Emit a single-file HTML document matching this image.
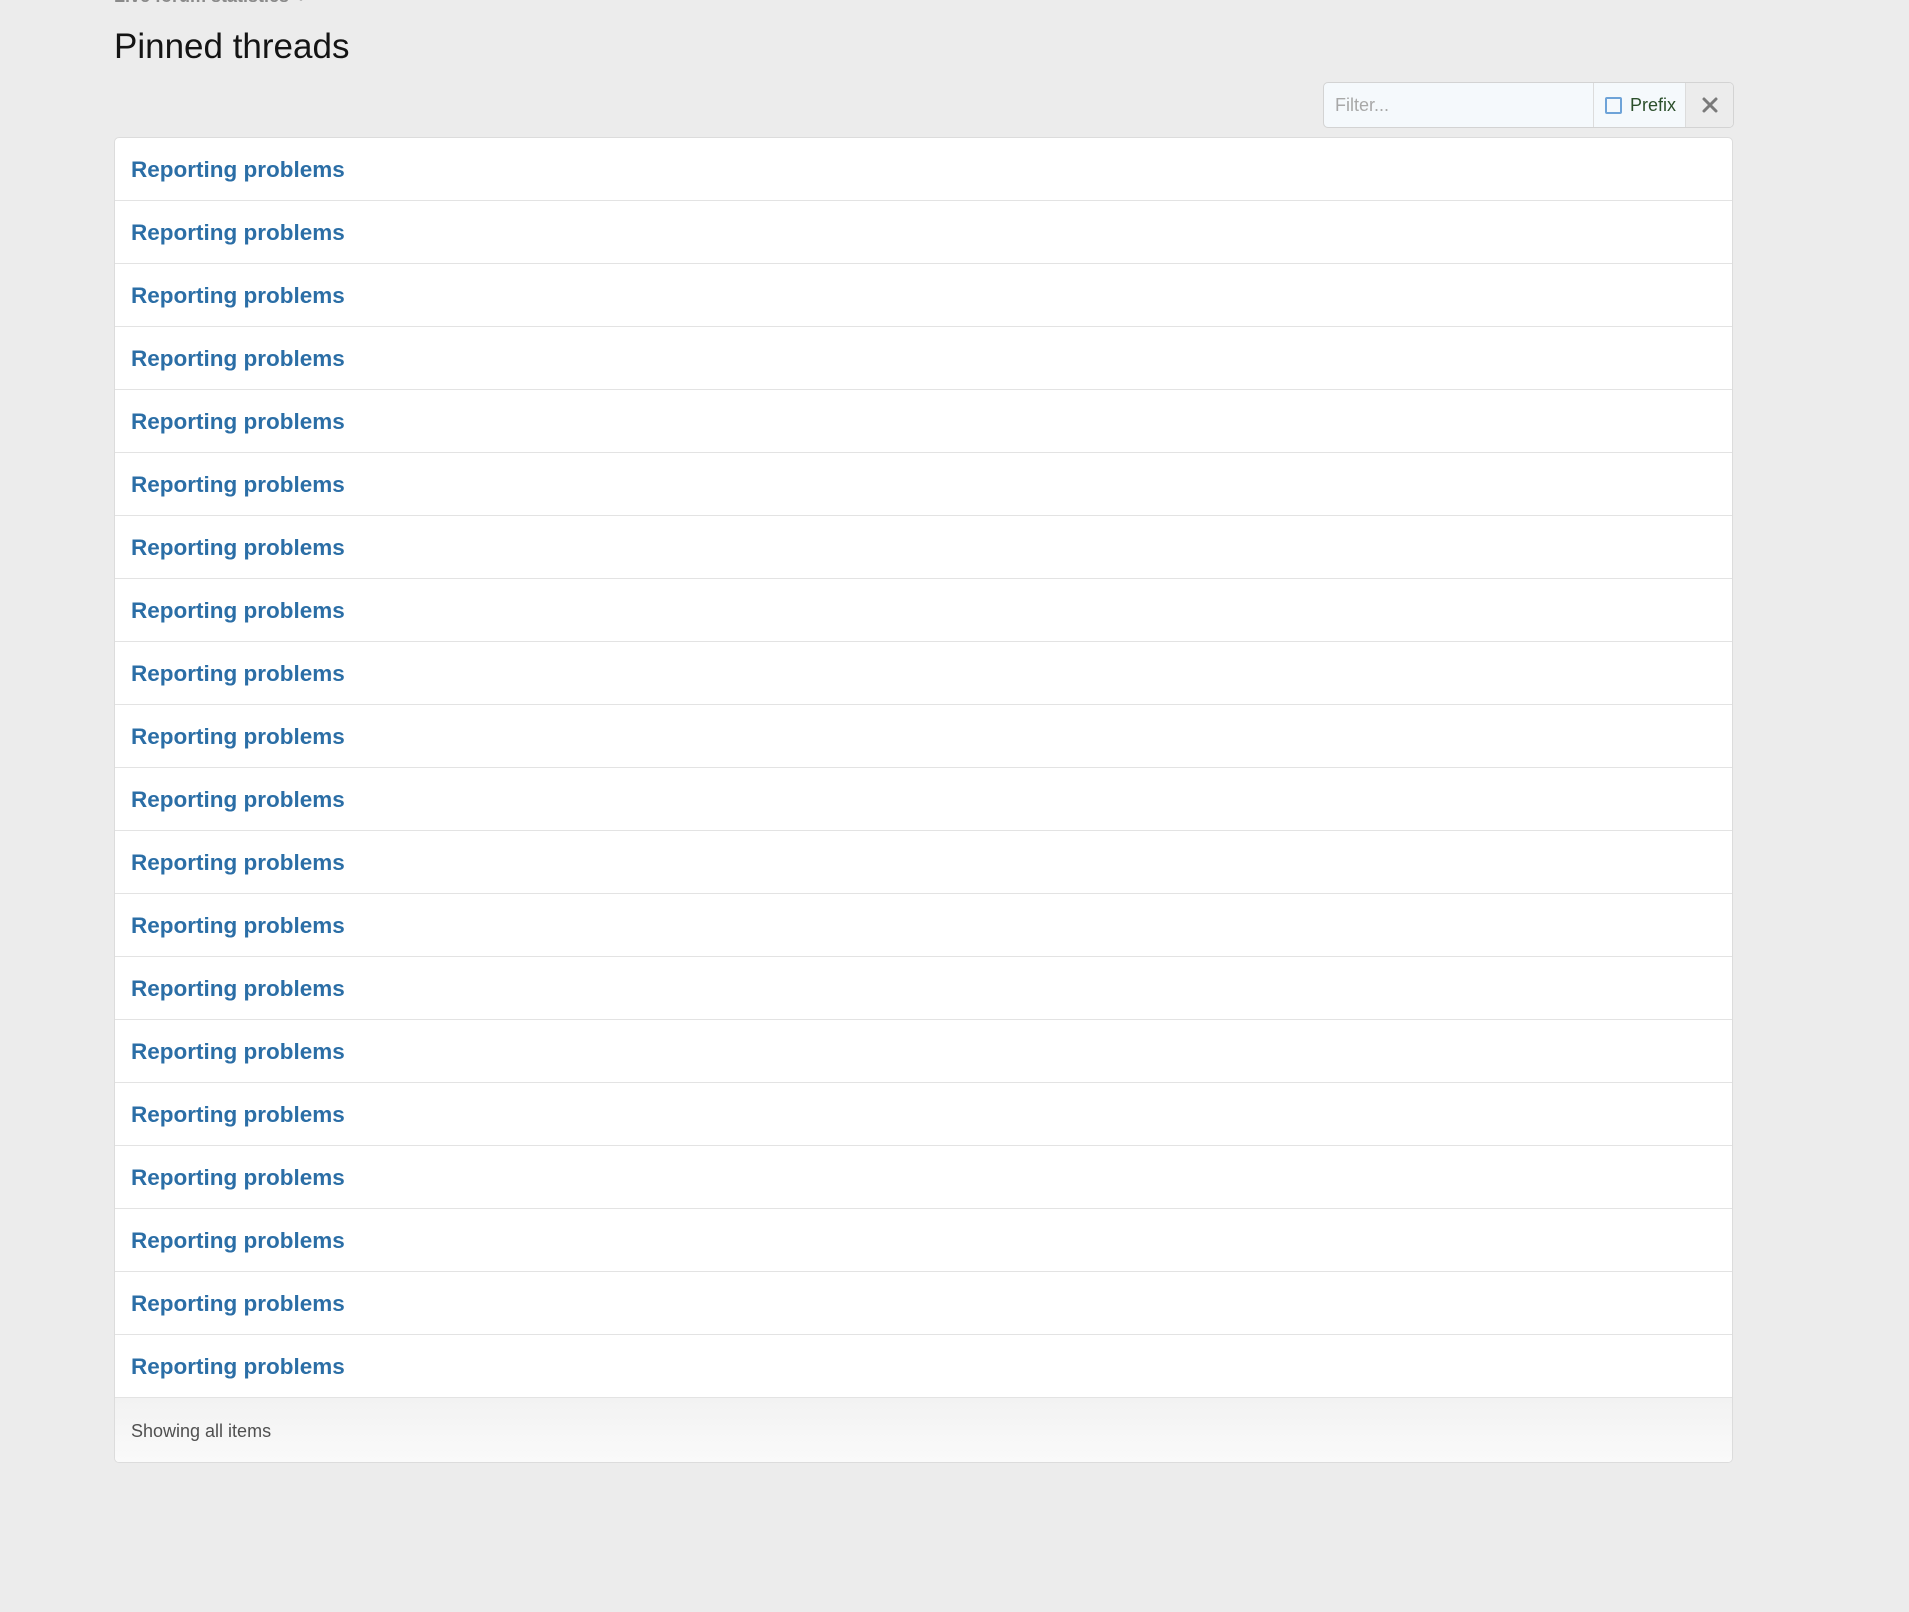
<!DOCTYPE html>
<html><head><meta charset="utf-8"><style>
html,body{margin:0;padding:0}
body{width:1909px;height:1612px;background:#ececec;position:relative;overflow:hidden;font-family:"Liberation Sans",sans-serif}
.bc{position:absolute;left:114px;top:-14px;font-size:18px;font-weight:bold;color:#8a8a8a}
h1{position:absolute;left:114px;top:23px;margin:0;font-weight:normal;font-size:35px;color:#141414;line-height:48px}
.filter{position:absolute;left:1323px;top:82px;width:409px;height:44px;border:1px solid #d3d3d3;border-radius:5px;background:#f5f9fc;overflow:hidden}
.filter .inp{position:absolute;left:11px;top:12px;font-size:18px;color:#a8a8a8}
.filter .pf{position:absolute;left:269px;top:0;width:91px;height:44px;border-left:1px solid #dcdcdc;}
.filter .cb{position:absolute;left:11px;top:14px;width:13px;height:13px;border:2px solid #6ea3d8;border-radius:2px}
.filter .pt{position:absolute;left:36px;top:12px;font-size:18px;color:#2b4f2b}
.filter .x{position:absolute;left:361px;top:0;width:48px;height:44px;border-left:1px solid #dcdcdc;background:#ececec;}
.box{position:absolute;left:114px;top:137px;width:1617px;height:1324px;border:1px solid #dcdcdc;border-radius:5px;background:#fff;overflow:hidden}
.row{height:62px;border-bottom:1px solid #e3e3e3;position:relative}
.row a{position:absolute;left:16px;top:19px;font-size:22.5px;font-weight:bold;color:#2b6ea6;text-decoration:none}
.foot{height:64px;background:linear-gradient(#f2f2f2,#fafafa);position:relative}
.foot span{position:absolute;left:16px;top:23px;font-size:18px;color:#505050}
</style></head><body>
<div class="bc">Live forum statistics &nbsp;›</div>
<h1>Pinned threads</h1>
<div class="filter">
<div class="inp">Filter...</div>
<div class="pf"><div class="cb"></div><div class="pt">Prefix</div></div>
<div class="x"><svg width="48" height="44" viewBox="0 0 48 44"><path d="M18 16L30 28M30 16L18 28" stroke="#7a7a7a" stroke-width="3" stroke-linecap="round"/></svg></div>
</div>
<div class="box">
<div class="row"><a>Reporting problems</a></div>
<div class="row"><a>Reporting problems</a></div>
<div class="row"><a>Reporting problems</a></div>
<div class="row"><a>Reporting problems</a></div>
<div class="row"><a>Reporting problems</a></div>
<div class="row"><a>Reporting problems</a></div>
<div class="row"><a>Reporting problems</a></div>
<div class="row"><a>Reporting problems</a></div>
<div class="row"><a>Reporting problems</a></div>
<div class="row"><a>Reporting problems</a></div>
<div class="row"><a>Reporting problems</a></div>
<div class="row"><a>Reporting problems</a></div>
<div class="row"><a>Reporting problems</a></div>
<div class="row"><a>Reporting problems</a></div>
<div class="row"><a>Reporting problems</a></div>
<div class="row"><a>Reporting problems</a></div>
<div class="row"><a>Reporting problems</a></div>
<div class="row"><a>Reporting problems</a></div>
<div class="row"><a>Reporting problems</a></div>
<div class="row"><a>Reporting problems</a></div>
<div class="foot"><span>Showing all items</span></div>
</div>
</body></html>
